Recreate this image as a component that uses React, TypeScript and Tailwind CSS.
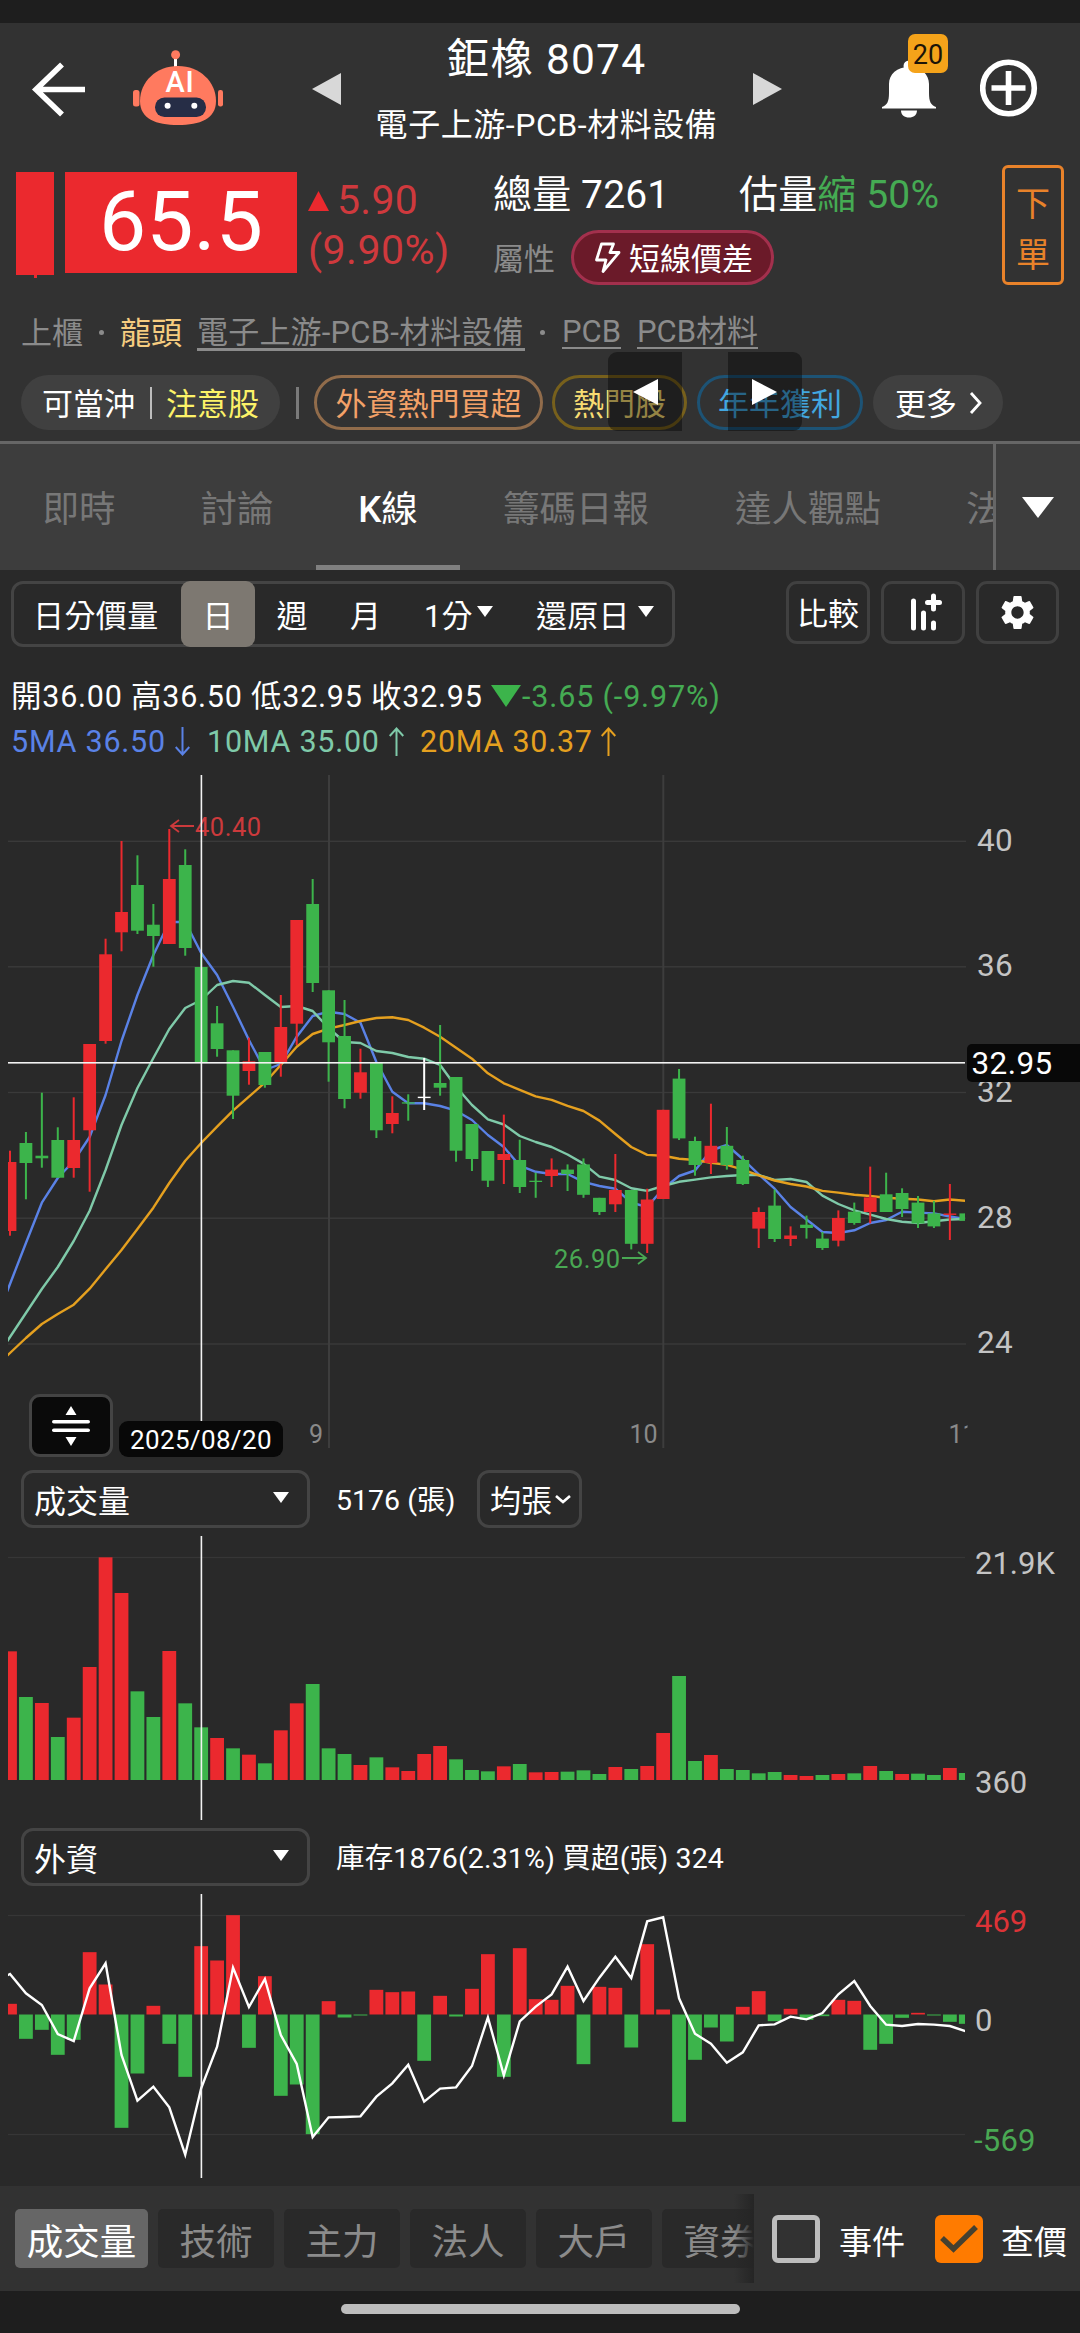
import React from "react";
import { MdSettings } from "react-icons/md";

const RED = "#eb292e";
const GREEN = "#3cb44b";

const X0 = 10;
const STEP = 15.93;
const cx = (i: number) => X0 + i * STEP;
const EDGE_R = 965;

/* [colour, high, body top, body bottom, low] */
type Candle = [string, number, number, number, number];
const candles: Candle[] = [
  ["R", 1150.7, 1162, 1231, 1235.7],
  ["G", 1132, 1143, 1163, 1199.3],
  ["G", 1092.7, 1155.7, 1158.3, 1167.7],
  ["G", 1127.3, 1140, 1177.7, 1177.7],
  ["R", 1097.3, 1140, 1168, 1177.7],
  ["R", 1044, 1044, 1130.3, 1191.7],
  ["R", 938.7, 954.3, 1041, 1043.7],
  ["R", 841, 912, 932.3, 951.3],
  ["G", 855.3, 885, 930.7, 934],
  ["G", 904, 924.7, 936, 966.7],
  ["R", 829, 879, 944, 944],
  ["G", 849.3, 865, 948, 955.7],
  ["G", 954, 967, 1062.7, 1062.7],
  ["G", 1006, 1023.3, 1049, 1056.7],
  ["G", 1050.3, 1050.3, 1095.7, 1119],
  ["R", 1037.7, 1061.3, 1071, 1084.7],
  ["G", 1052, 1052, 1085, 1087.7],
  ["R", 995, 1027, 1062, 1076.7],
  ["R", 920, 920, 1023.7, 1045],
  ["G", 879, 904, 983, 992],
  ["G", 990.3, 990.3, 1042.3, 1081.7],
  ["G", 1000, 1036, 1099, 1108.3],
  ["R", 1048.7, 1072.3, 1092.7, 1098.7],
  ["G", 1062.7, 1062.7, 1130.3, 1138],
  ["R", 1096.3, 1113, 1124, 1133.3],
  ["G", 1094.3, 1102.3, 1103.6, 1120.7],
  ["W", 1058, 1096.7, 1098.1, 1110],
  ["G", 1025, 1083, 1087.7, 1095.7],
  ["G", 1077, 1077, 1150.7, 1161.7],
  ["G", 1124, 1124, 1159, 1171],
  ["G", 1151, 1151, 1180.7, 1187],
  ["R", 1114.6, 1154, 1160, 1184],
  ["G", 1139.7, 1160, 1187, 1193],
  ["G", 1172.7, 1180.7, 1182, 1197.8],
  ["R", 1158.4, 1169.6, 1176, 1187],
  ["G", 1164.4, 1169.6, 1174, 1191],
  ["G", 1158.4, 1164.4, 1194.8, 1197.8],
  ["G", 1197.8, 1197.8, 1212, 1215],
  ["R", 1154, 1190, 1204.3, 1212],
  ["G", 1190, 1190, 1243.8, 1249.4],
  ["R", 1188.7, 1199.5, 1243.8, 1253],
  ["R", 1109.8, 1109.8, 1199, 1199],
  ["G", 1069, 1078.6, 1138.4, 1140],
  ["G", 1136.7, 1141, 1165, 1175.7],
  ["R", 1103.7, 1145.8, 1163, 1174],
  ["G", 1127, 1145.8, 1165, 1169.6],
  ["G", 1155.7, 1160, 1184, 1185],
  ["R", 1207.4, 1212, 1228.6, 1248],
  ["G", 1189.6, 1205.6, 1239, 1242],
  ["R", 1226.4, 1235.5, 1239, 1246],
  ["G", 1215.6, 1224.7, 1228, 1238.6],
  ["G", 1232, 1238.6, 1248, 1249.9],
  ["R", 1210.4, 1218, 1240.7, 1246.4],
  ["G", 1202.6, 1211.7, 1223, 1224.7],
  ["R", 1166.6, 1197.4, 1212, 1223.4],
  ["G", 1172.7, 1194.3, 1212, 1212],
  ["G", 1188.3, 1193, 1209, 1217],
  ["G", 1196, 1202.6, 1223.4, 1228],
  ["G", 1200.9, 1213.4, 1226.4, 1228],
  ["R", 1184, 1213.5, 1214.9, 1240],
  ["G", 1213.4, 1213.4, 1220.8, 1220.8],
];

const ma5 = [
  1284, 1243, 1202.7, 1178, 1161, 1137, 1095, 1041, 995, 955, 922, 922, 953, 975, 1006.7, 1040, 1070, 1064,
  1036.7, 1016, 1011.7, 1014, 1022.7, 1062, 1091.7, 1103.3, 1103.3, 1106, 1110.7, 1120, 1135, 1147, 1165.7,
  1171.8, 1174, 1174, 1181.8, 1186, 1188.7, 1202.6, 1207, 1188.7, 1176, 1170.5, 1150.5, 1145, 1159, 1174.4,
  1188.7, 1207, 1219.5, 1232, 1233, 1230.3, 1223, 1220, 1211.7, 1212.6, 1213.4, 1216.5, 1219,
];
const ma10 = [
  1337, 1313, 1289, 1267, 1241, 1210.7, 1170, 1125, 1088, 1058, 1029, 1008, 1000, 985, 981, 982.7, 995, 1007,
  1006, 1011, 1028, 1042, 1043, 1051, 1053, 1057, 1058.7, 1065, 1086.7, 1105, 1119.3, 1124.5, 1136, 1142, 1147,
  1154.5, 1163.6, 1176.6, 1180, 1188.3, 1190.9, 1186, 1181.8, 1179.6, 1177.4, 1176, 1175, 1175, 1180, 1179,
  1182, 1195.6, 1204, 1210.4, 1214.7, 1219, 1221.7, 1223, 1221.2, 1219.5, 1219,
];
const ma20 = [
  1353, 1338, 1324, 1314, 1304.7, 1288.7, 1269.3, 1250, 1229, 1207.7, 1183, 1160.7, 1143, 1126.7, 1110.7,
  1096.7, 1082.7, 1065, 1046.7, 1034, 1028.7, 1025, 1021, 1018, 1017.3, 1020, 1027.7, 1036.7, 1047.7, 1058.7,
  1073.3, 1083.3, 1089.8, 1096.3, 1099.8, 1105.9, 1111, 1120.6, 1134, 1147, 1154.9, 1155.8, 1158.8, 1160,
  1162.7, 1164.9, 1169.6, 1175.3, 1180.5, 1184, 1186.5, 1190.9, 1192.6, 1194.8, 1196, 1197.8, 1198.7, 1199.5,
  1201.3, 1199.5, 1200.8,
];

const volHeights = [
  386, 249, 231, 129, 187, 339, 668, 561, 266, 189, 387, 230, 158, 126, 95, 76, 50, 149, 230, 288, 95, 78, 45,
  68, 38, 27, 78, 102, 62, 30, 26, 41, 48, 23, 24, 25, 29, 18, 39, 33, 42, 141, 312, 57, 75, 33, 30, 20, 24, 15,
  12, 15, 18, 20, 42, 27, 18, 19, 15, 36, 21,
];
const volColors = "RGRGRRRRGGRGGRGRGRRGGGRGRRRRGGGRGRRGGGRGRRGRRGGGGRRGRGRGRGGRG".split("");
volColors[43] = "G";
volColors[44] = "R";

const foreign = [
  32, -73, -46, -121, -76, 187, 90, -340, -177, 26, -88, -187, 205, 162, 298, -100, 115, -244, -210, -359, 40,
  -9, -3, 74, 67, 69, -139, 56, -6, 77, 181, -187, 199, 46, 44, 86, -149, 83, 80, -99, 211, 15, -322, -136, -39,
  -81, 23, 70, -20, 17, -16, -5, 44, 41, -106, -88, -10, 5, -3, -22, -28,
];
const holding = [
  342, 400, 435, 522, 543, 385, 310, 585, 722, 680, 742, 884, 685, 560, 323, 441, 357, 525, 612, 831, 772, 771,
  769, 710, 670, 614, 725, 686, 682, 618, 472, 646, 484, 440, 403, 320, 423, 353, 290, 354, 184, 172, 415, 521,
  551, 608, 577, 496, 493, 470, 478, 459, 403, 363, 438, 494, 498, 492, 494, 498, 514,
];

/* Prepends the point where the series meets the left edge of the plot. */
const line = (v: number[], lead = v[0] - ((v[1] - v[0]) * 3) / STEP) =>
  `${cx(0) - 3},${lead} ` + v.map((y, i) => `${cx(i)},${y}`).join(" ");

const paint = (c: string) => (c === "R" ? RED : c === "G" ? GREEN : "#ffffff");

function PriceChart() {
  const rows: [number, string][] = [
    [841.3, "40"],
    [966.8, "36"],
    [1092.5, "32"],
    [1218.2, "28"],
    [1344, "24"],
  ];
  return (
    <svg width="1080" height="690" viewBox="0 775 1080 690" className="block">
      <defs>
        <clipPath id="plot">
          <rect x="8" y="700" width={EDGE_R - 8} height="1600" />
        </clipPath>
        <clipPath id="axis">
          <rect x="8" y="1400" width="959.5" height="100" />
        </clipPath>
      </defs>
      {rows.map(([y, t]) => (
        <g key={t}>
          <rect x="8" y={y - 0.7} width="958" height="1.4" fill="#3a3a3a" />
          <text x="977" y={y + 9.3} fontSize="31.5" letterSpacing="0.3" fill="#c4c4c4">
            {t}
          </text>
        </g>
      ))}
      <rect x="328" y="775" width="2" height="673" fill="#3d3d3d" />
      <rect x="662.3" y="775" width="2" height="673" fill="#3d3d3d" />
      <g clipPath="url(#plot)">
        <g fill="none" strokeWidth="2.4" strokeLinejoin="round">
          <polyline points={line(ma5)} stroke="#5a82e6" />
          <polyline points={line(ma10)} stroke="#7fcaa9" />
          <polyline points={line(ma20)} stroke="#e5a01f" />
        </g>
        {candles.map(([c, h, t, b, l], i) => (
          <g key={i} fill={paint(c)}>
            <rect x={cx(i) - 1} y={h} width="2" height={l - h} />
            <rect x={cx(i) - 6.4} y={t} width="12.8" height={b - t} />
          </g>
        ))}
      </g>
      <g fill="#cc3a3c">
        <path d="M194 826H171M179 820l-8 6 8 6" fill="none" stroke="#cc3a3c" strokeWidth="1.8" />
        <text x="195" y="835.5" fontSize="25.5" letterSpacing="0.5">
          40.40
        </text>
      </g>
      <g fill="#49a853">
        <path d="M622 1258H646M638 1252l8 6 -8 6" fill="none" stroke="#49a853" strokeWidth="1.8" />
        <text x="554" y="1267.5" fontSize="25.5" letterSpacing="0.5">
          26.90
        </text>
      </g>
      <rect x="8" y="1062" width="957" height="1.6" fill="#f2f2f2" />
      <rect x="200.6" y="775" width="1.6" height="648" fill="#f2f2f2" />
      <g fill="#8a8a8a" fontSize="25">
        <text x="309" y="1443">9</text>
        <text x="629.5" y="1443">10</text>
        <text x="948.5" y="1443" clipPath="url(#axis)">
          11
        </text>
      </g>
      <rect x="119" y="1421" width="164" height="36" rx="9" fill="#080808" />
      <text x="130" y="1449" fontSize="26" letterSpacing="0.35" fill="#fff">
        2025/08/20
      </text>
      <rect x="967" y="1044" width="120" height="38" rx="5" fill="#080808" />
      <text x="971.5" y="1073.5" fontSize="31.5" letterSpacing="0.4" fill="#fff">
        32.95
      </text>
    </svg>
  );
}

function VolumeChart() {
  return (
    <svg width="1080" height="291" viewBox="0 1533 1080 291" className="block">
      <rect x="8" y="1556.8" width="957" height="1.4" fill="#363636" />
      <g clipPath="url(#plot)">
        {volHeights.map((h, i) => (
          <rect key={i} x={cx(i) - 6.9} y={1780 - h / 3} width="13.8" height={h / 3} fill={paint(volColors[i])} />
        ))}
      </g>
      <rect x="200.6" y="1536" width="1.6" height="284" fill="#f2f2f2" />
      <g fill="#c4c4c4" fontSize="31">
        <text x="975" y="1574">21.9K</text>
        <text x="975" y="1792.5">360</text>
      </g>
    </svg>
  );
}

function ForeignChart() {
  return (
    <svg width="1080" height="296" viewBox="0 1890 1080 296" className="block">
      <rect x="8" y="1914.8" width="957" height="1.4" fill="#363636" />
      <rect x="8" y="2133.8" width="957" height="1.4" fill="#363636" />
      <g clipPath="url(#plot)">
        {foreign.map((v, i) => (
          <rect
            key={i}
            x={cx(i) - 6.9}
            y={v > 0 ? 2014.5 - v / 3 : 2014.5}
            width="13.8"
            height={Math.abs(v) / 3}
            fill={v > 0 ? RED : GREEN}
          />
        ))}
        <polyline points={line(holding.map((p) => 1860 + p / 3), 1975.5)} fill="none" stroke="#fff" strokeWidth="2.4" />
      </g>
      <rect x="200.6" y="1894" width="1.6" height="284" fill="#f2f2f2" />
      <g fontSize="31">
        <text x="975" y="1931.5" fill="#dc3337">
          469
        </text>
        <text x="975" y="2031" fill="#c4c4c4">
          0
        </text>
        <text x="974" y="2151" letterSpacing="0.2" fill="#49a853">
          -569
        </text>
      </g>
    </svg>
  );
}

function Caret({ className }: { className: string }) {
  return (
    <svg viewBox="0 0 16 11" preserveAspectRatio="none" className={className} fill="#fff">
      <path d="M0 0H16L8 11Z" />
    </svg>
  );
}

function Robot() {
  return (
    <svg width="90" height="76" viewBox="133 50 90 76" className="-mt-[2px] ml-[48px]">
      <rect x="174" y="58" width="3" height="10" fill="#fff" />
      <circle cx="175.6" cy="54.7" r="4.5" fill="#ff7a5f" />
      <rect x="133" y="90" width="6.5" height="16.5" rx="2.5" fill="#ff7a5f" />
      <rect x="218" y="90" width="5" height="16.5" rx="2.2" fill="#ff7a5f" />
      <path
        d="M178 66C200 66 216 82 216 101C216 119 200 125 178 125C156 125 140 119 140 101C140 82 156 66 178 66Z"
        fill="#ff7a5f"
      />
      <rect x="155" y="97.5" width="51" height="19.5" rx="9.5" fill="#262d46" />
      <circle cx="167.6" cy="105.7" r="3" fill="#fff" />
      <circle cx="194.3" cy="105.7" r="3" fill="#fff" />
      <text x="165.5" y="92" fontSize="29" fontWeight="500" letterSpacing="0.8" fill="#fff">
        AI
      </text>
    </svg>
  );
}

function Header() {
  return (
    <header className="flex h-[127px] items-start">
      <div className="flex h-[131px] w-[312px] shrink-0 items-center">
        <svg width="54" height="56" viewBox="31 60 54 56" className="ml-[31px]" fill="none" stroke="#fff" strokeWidth="5.6">
          <path d="M85 88.5H36M62 63.5L36 88.5L62 113.5" />
        </svg>
        <Robot />
      </div>
      <svg width="30" height="33" viewBox="0 0 30 33" className="mt-[50px] shrink-0" fill="#d8d8d8">
        <path d="M29 0V32L0 16Z" />
      </svg>
      <div className="flex w-[411px] shrink-0 flex-col items-center pt-[15px] text-white">
        <div className="-ml-[2px] h-[44px] whitespace-nowrap text-[42.5px] leading-[44px] tracking-[1.2px]">鉅橡 8074</div>
        <div className="-ml-[2px] mt-[24px] h-[38px] whitespace-nowrap text-[32px] leading-[38px] tracking-[0.55px]">
          電子上游-PCB-材料設備
        </div>
      </div>
      <svg width="30" height="33" viewBox="0 0 30 33" className="mt-[50px] shrink-0" fill="#d8d8d8">
        <path d="M0 0V32L29 16Z" />
      </svg>
      <div className="relative ml-[99px] mt-[11px] h-[84px] w-[66px] shrink-0">
        <svg width="54" height="58" viewBox="882 60 54 58" className="mt-[26px]" fill="#fff">
          <circle cx="909" cy="66" r="5.5" />
          <path d="M889 84C889 74 897 67 909 67C921 67 929 74 929 84V93C929 102 931 105 936 107V108.500H882V107C887 105 889 102 889 93Z" />
          <path d="M901 110.500H917C917 115 913.500 117.500 909 117.500C904.500 117.500 901 115 901 110.500Z" />
        </svg>
        <div className="absolute left-[26px] top-0 flex h-[39px] w-[40px] items-center justify-center rounded-[7px] bg-[#f5a31a] text-[27px] leading-none text-[#1c1408]">
          <span className="pt-[3px]">20</span>
        </div>
      </div>
      <svg width="58" height="58" viewBox="0 0 58 58" className="ml-[32px] mt-[36px] shrink-0" fill="none" stroke="#fff" strokeWidth="5.6">
        <circle cx="28.500" cy="29" r="25.800" />
        <path d="M28.500 12V46M11.500 29H45.500" />
      </svg>
    </header>
  );
}

function Quote() {
  return (
    <section className="flex h-[150px] items-start pt-[15px] leading-none">
      <div className="ml-[16px] mt-[7px] flex w-[38px] flex-col items-center">
        <div className="h-[103px] w-full bg-[#eb292e]" />
        <div className="h-[3px] w-[3px] bg-[#eb292e]" />
      </div>
      <div className="ml-[11px] mt-[7px] flex h-[101px] w-[232px] items-center justify-center bg-[#eb292e] text-[84px] text-white">
        <span className="pb-[2px]">65.5</span>
      </div>
      <div className="ml-[11px] w-[185px] text-[41px] text-[#cf393d]">
        <div className="flex h-[49px] items-center pt-[22px]">
          <svg width="21" height="20" viewBox="0 0 21 20" fill={RED}>
            <path d="M0 20H21L10.500 0Z" />
          </svg>
          <span className="ml-[8px] tracking-[0.3px]">5.90</span>
        </div>
        <div className="mt-[15px] pt-[1px] tracking-[0.5px]">(9.90%)</div>
      </div>
      <div className="w-[509px]">
        <div className="flex h-[60px] items-center text-[39px] tracking-[0.15px] text-white">
          <span className="w-[246px]">總量 7261</span>
          <span>
            估量<span className="text-[#45ab53]">縮 50%</span>
          </span>
        </div>
        <div className="mt-[5px] flex h-[55px] items-center text-[31px]">
          <span className="w-[78px] pt-[3px] text-[#8b8b8b]">屬性</span>
          <div className="flex h-[55px] w-[203px] items-center rounded-full border-[3px] border-[#a3304d] bg-[#6b1a29] text-white">
            <svg
              width="27"
              height="32"
              viewBox="594 242 27 32"
              className="ml-[20px] mr-[8px]"
              fill="none"
              stroke="#fff"
              strokeWidth="2.8"
              strokeLinejoin="round"
            >
              <path d="M601.500 244H613.500L610 252.500H619L603 271.500L606 260H596.500Z" />
            </svg>
            <span className="pt-[3px]">短線價差</span>
          </div>
        </div>
      </div>
      <div className="flex h-[120px] w-[62px] flex-col items-center rounded-[6px] border-[3px] border-[#e8822a] pt-[19px] text-[34px] text-[#e8822a]">
        <span className="h-[51px]">下</span>
        <span>單</span>
      </div>
    </section>
  );
}

function Tags() {
  return (
    <section className="relative h-[141px] whitespace-nowrap text-[31px] leading-none">
      <div className="flex h-[64px] items-center text-[#8b8b8b]">
        <span className="ml-[21px] w-[62px] pt-[2px]">上櫃</span>
        <i className="ml-[16px] h-[5px] w-[5px] rounded-full bg-[#8b8b8b]" />
        <span className="ml-[16px] w-[77px] pt-[2px] text-[#f6cd80]">龍頭</span>
        <span className="w-[328px] border-b-[3px] border-[#8b8b8b] pt-[4px] tracking-[0.2px]">電子上游-PCB-材料設備</span>
        <i className="ml-[15px] h-[5px] w-[5px] rounded-full bg-[#8b8b8b]" />
        <span className="ml-[17px] w-[59px] border-b-2 border-[#8b8b8b]">PCB</span>
        <span className="ml-[16px] w-[121px] border-b-2 border-[#8b8b8b]">PCB材料</span>
      </div>
      <div className="mt-[11px] flex h-[55px] items-center">
        <div className="ml-[21px] flex h-full w-[259px] items-center rounded-full bg-[#404040] pl-[21px] text-white">
          <span className="w-[108px] pt-[3px]">可當沖</span>
          <i className="h-[32px] w-[2px] bg-[#bdbdbd]" />
          <span className="ml-[14px] pt-[3px] text-[#fcf268]">注意股</span>
        </div>
        <i className="ml-[16px] h-[32px] w-[3px] bg-[#7a7a7a]" />
        <div className="ml-[15px] flex h-full w-[229px] items-center justify-center rounded-full border-[3px] border-[#916c4b] pt-[3px] text-[#f3a168]">
          外資熱門買超
        </div>
        <div className="ml-[9px] flex h-full w-[135px] items-center justify-center rounded-full border-[3px] border-[#77601c] pt-[3px] text-[#f7dc72]">
          熱門股
        </div>
        <div className="ml-[10px] flex h-full w-[166px] items-center justify-center rounded-full border-[3px] border-[#1d5375] pt-[3px] text-[#42a7e0]">
          年年獲利
        </div>
        <div className="ml-[10px] flex h-full w-[130px] items-center rounded-full bg-[#404040] pl-[22px] text-white">
          <span className="pt-[3px]">更多</span>
          <svg width="13" height="24" viewBox="0 0 13 24" className="ml-[12px]" fill="none" stroke="#fff" strokeWidth="2.8">
            <path d="M2 2L11 12L2 22" />
          </svg>
        </div>
      </div>
      <div className="absolute left-[608px] top-[52px] flex h-[79px] w-[194px] justify-between">
        <div className="flex w-[74px] items-center rounded-l-[9px] bg-black/40 pl-[25px]">
          <svg width="26" height="26" viewBox="0 0 26 26" fill="#fff">
            <path d="M25 0V26L0 13Z" />
          </svg>
        </div>
        <div className="flex w-[74px] items-center rounded-r-[9px] bg-black/40 pl-[24px]">
          <svg width="26" height="26" viewBox="0 0 26 26" fill="#fff">
            <path d="M0 0V26L25 13Z" />
          </svg>
        </div>
      </div>
    </section>
  );
}

function Tabs() {
  return (
    <nav className="flex h-[129px] border-t-[3px] border-[#666] bg-[#3d3d3d] text-[36.5px] leading-none text-[#777]">
      <div className="flex w-[993px] items-stretch overflow-hidden whitespace-nowrap">
        <span className="flex w-[158px] shrink-0 items-center justify-center pt-[6px]">即時</span>
        <span className="flex w-[158px] shrink-0 items-center justify-center pt-[6px]">討論</span>
        <span className="flex w-[144px] shrink-0 items-center justify-center border-b-[5px] border-[#808080] pt-[11px] text-white">
          <span className="font-medium">K</span>線
        </span>
        <span className="flex w-[232px] shrink-0 items-center justify-center pt-[6px]">籌碼日報</span>
        <span className="flex w-[232px] shrink-0 items-center justify-center pt-[6px]">達人觀點</span>
        <span className="flex w-[158px] shrink-0 items-center pl-[42px] pt-[6px]">法人</span>
      </div>
      <div className="flex w-[87px] items-center border-l-[3px] border-[#666] pl-[26px]">
        <Caret className="h-[21px] w-[32px]" />
      </div>
    </nav>
  );
}

function Toolbar() {
  const btn = "flex h-[63px] items-center justify-center rounded-[11px] border-[3px] border-[#404040]";
  return (
    <div className="flex h-[88px] items-start whitespace-nowrap pt-[11px] text-[31px] leading-none text-white">
      <div className="ml-[11px] flex h-[66px] w-[664px] items-center rounded-[12px] border-[3px] border-[#444]">
        <span className="w-[167px] pl-[19px] pt-[4px] tracking-[0.4px]">日分價量</span>
        <span className="-my-[3px] flex h-[66px] w-[74px] items-center justify-center rounded-[9px] bg-[#7d7871] pt-[4px]">日</span>
        <span className="w-[74px] pt-[4px] text-center">週</span>
        <span className="w-[73px] pt-[4px] text-center">月</span>
        <span className="flex w-[110px] pl-[22px] pt-[4px]">
          1分
          <Caret className="ml-[5px] mt-[5px] h-[11px] w-[16px]" />
        </span>
        <span className="flex pl-[24px] pt-[4px] tracking-[0.3px]">
          還原日
          <Caret className="ml-[8px] mt-[5px] h-[11px] w-[16px]" />
        </span>
      </div>
      <div className={btn + " ml-[111px] w-[84px] pt-[3px]"}>比較</div>
      <div className={btn + " ml-[11px] w-[84px]"}>
        <svg width="32" height="38" viewBox="0 0 32 38" className="-mt-[2px] ml-[5px]" stroke="#fff" strokeWidth="5" strokeLinecap="round">
          <path d="M3.500 8V35M13.500 20V35M23.500 30V35M23.500 3V16M17.500 9.500H29.500" />
        </svg>
      </div>
      <div className={btn + " ml-[11px] w-[83px]"}>
        <MdSettings className="h-[41px] w-[41px]" />
      </div>
    </div>
  );
}

function Arrow({ up, color }: { up?: boolean; color: string }) {
  return (
    <svg width="15" height="29" viewBox="0 0 15 29" fill="none" stroke={color} strokeWidth="2" className="-mt-[2px] shrink-0">
      {up ? <path d="M7.500 29V1M0.700 9L7.500 1.500L14.300 9" /> : <path d="M7.500 0V28M0.700 20L7.500 27.500L14.300 20" />}
    </svg>
  );
}

function Readout() {
  return (
    <div className="h-[117px] whitespace-nowrap pt-[16px] text-[30.5px] leading-none tracking-[0.75px] text-white">
      <div className="flex h-[44px] items-center pl-[11px]">
        <span className="w-[120px] pt-[2px]">開36.00</span>
        <span className="w-[120px] pt-[2px]">高36.50</span>
        <span className="w-[120px] pt-[2px]">低32.95</span>
        <span className="w-[120px] pt-[2px]">收32.95</span>
        <svg width="30" height="22" viewBox="0 0 30 22" fill={GREEN}>
          <path d="M0 0H30L15 22Z" />
        </svg>
        <span className="ml-[1px] pt-[2px] tracking-[0.85px] text-[#45ab53]">-3.65 (-9.97%)</span>
      </div>
      <div className="mt-[2px] flex h-[44px] items-center pl-[11px]">
        <span className="w-[164px] pt-[1px] text-[#5a82e6]">5MA 36.50</span>
        <Arrow color="#5a82e6" />
        <span className="ml-[17px] w-[182px] pt-[1px] text-[#7fcaa9]">10MA 35.00</span>
        <Arrow up color="#7fcaa9" />
        <span className="ml-[16px] w-[181px] pt-[1px] text-[#e5a01f]">20MA 30.37</span>
        <Arrow up color="#e5a01f" />
      </div>
    </div>
  );
}

function Select({ label }: { label: string }) {
  return (
    <div className="ml-[21px] flex h-[58px] w-[289px] items-center justify-between rounded-[12px] border-[3px] border-[#444] pl-[10px] pr-[18px] text-[32px]">
      <span className="pt-[5px]">{label}</span>
      <Caret className="-mt-[3px] h-[11px] w-[16px]" />
    </div>
  );
}

function BottomBar() {
  return (
    <div className="flex h-[105px] bg-[#323232] leading-none">
      <div className="relative flex w-[754px] items-center gap-[10px] overflow-hidden whitespace-nowrap pl-[15px] text-[36.5px] text-[#8b8b8b]">
        <span className="flex h-[59px] w-[133px] shrink-0 items-center justify-center rounded-[5px] bg-[#666] pt-[9px] text-white">成交量</span>
        {["技術", "主力", "法人", "大戶", "資券"].map((t) => (
          <span key={t} className="flex h-[59px] w-[116px] shrink-0 items-center justify-center rounded-[5px] bg-[#292929] pt-[9px]">
            {t}
          </span>
        ))}
        <div className="absolute right-0 top-[8px] h-[89px] w-[20px] bg-gradient-to-r from-transparent to-[#252525]" />
      </div>
      <div className="flex items-center whitespace-nowrap pl-[18px] text-[33px] text-white">
        <i className="h-[48px] w-[48px] rounded-[6px] border-[5.5px] border-[#bdbdbd]" />
        <span className="w-[115px] pl-[19px] pt-[7px]">事件</span>
        <i className="flex h-[48px] w-[48px] items-center justify-center rounded-[6px] bg-[#ff7b00]">
          <svg width="38" height="30" viewBox="0 0 38 30" fill="none" stroke="#45402f" strokeWidth="5.500">
            <path d="M2 14L13.500 25L36 3" />
          </svg>
        </i>
        <span className="pl-[18px] pt-[7px]">查價</span>
      </div>
    </div>
  );
}

export default function App() {
  return (
    <main className="h-[2333px] w-[1080px] overflow-hidden bg-[#292929] font-['Roboto','Noto_Sans_CJK_TC',sans-serif] text-white">
      <div className="h-[23px] bg-[#1e1e1e]" />
      <div className="bg-[#323232]">
        <Header />
        <Quote />
        <Tags />
      </div>
      <Tabs />
      <Toolbar />
      <Readout />
      <div className="relative">
        <PriceChart />
        <div className="absolute left-[29px] top-[619px] flex h-[63px] w-[84px] items-center justify-center rounded-[11px] border-[3px] border-[#444] bg-[#0a0a0a]">
          <svg width="38" height="40" viewBox="0 0 38 40" fill="#fff">
            <path d="M19 0L24.500 9H13.500ZM19 40L24.500 31H13.500Z" />
            <rect x="0" y="14" width="38" height="3.600" rx="1.800" />
            <rect x="0" y="22.500" width="38" height="3.600" rx="1.800" />
          </svg>
        </div>
      </div>
      <div className="flex h-[68px] items-center leading-none">
        <Select label="成交量" />
        <span className="ml-[26px] w-[141px] pt-[5px] text-[28.5px]">5176 (張)</span>
        <div className="flex h-[58px] w-[105px] items-center rounded-[12px] border-[3px] border-[#444] pl-[10px] text-[31px]">
          <span className="pt-[5px]">均張</span>
          <svg width="16" height="9" viewBox="0 0 16 9" className="ml-[3px]" fill="none" stroke="#fff" strokeWidth="2.6">
            <path d="M1 1L8 7L15 1" />
          </svg>
        </div>
      </div>
      <VolumeChart />
      <div className="flex h-[66px] items-center leading-none">
        <Select label="外資" />
        <span className="ml-[26px] pt-[5px] text-[28.5px] tracking-[0.15px]">庫存1876(2.31%) 買超(張) 324</span>
      </div>
      <ForeignChart />
      <BottomBar />
      <div className="flex h-[42px] justify-center bg-[#1e1e1e] pt-[13px]">
        <div className="h-[10px] w-[399px] rounded-full bg-[#bdbdbd]" />
      </div>
    </main>
  );
}
